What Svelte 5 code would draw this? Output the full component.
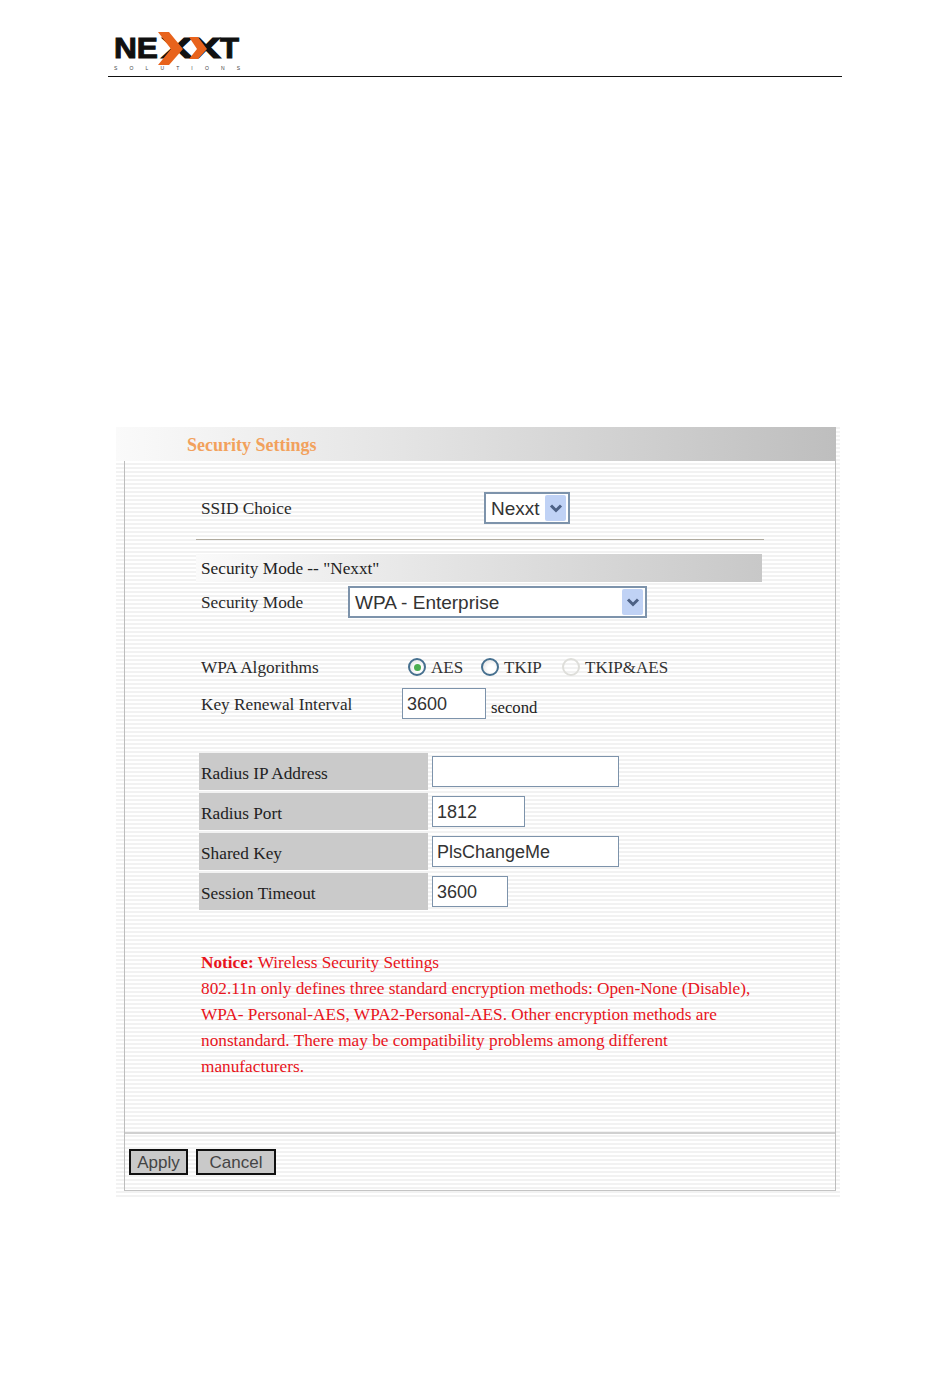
<script>
  let ssid = 'Nexxt';

  const radiusRows = [
    { label: 'Radius IP Address', value: '', width: 187 },
    { label: 'Radius Port', value: '1812', width: 93 },
    { label: 'Shared Key', value: 'PlsChangeMe', width: 187 },
    { label: 'Session Timeout', value: '3600', width: 76 }
  ];

  const notice = [
    '802.11n only defines three standard encryption methods: Open-None (Disable),',
    'WPA- Personal-AES, WPA2-Personal-AES. Other encryption methods are',
    'nonstandard. There may be compatibility problems among different',
    'manufacturers.'
  ];
</script>

{#snippet arrow()}
  <span class="arrow">
    <svg width="16" height="14" viewBox="0 0 16 14">
      <path d="M3 4.5 L8 9.5 L13 4.5" fill="none" stroke="#4d6185" stroke-width="3" />
    </svg>
  </span>
{/snippet}

<div class="page">
  <header class="doc-head">
    <svg class="logo" width="134" height="44" viewBox="0 0 134 44">
      <text x="6" y="31" class="mark" textLength="44" lengthAdjust="spacingAndGlyphs">NE</text>
      <text x="53" y="31" class="mark" textLength="32" lengthAdjust="spacingAndGlyphs">X</text>
      <text x="83" y="31" class="mark" textLength="30" lengthAdjust="spacingAndGlyphs">X</text>
      <text x="112" y="31" class="mark" textLength="19" lengthAdjust="spacingAndGlyphs">T</text>
      <path d="M50 5 L61 5 L75 22 L61 38 L50 38 L63 22 Z" fill="#e8631c" />
      <path d="M81 10 L90 10 L99 22 L90 32 L81 32 L89 22 Z" fill="#e8631c" />
      <text x="6" y="43" class="sub" textLength="126">SOLUTIONS</text>
    </svg>
  </header>

  <div class="panel">
    <div class="title-bar"><h1>Security Settings</h1></div>

    <div class="frame">
      <div class="content">
        <div class="row ssid-row">
          <span class="label">SSID Choice</span>
          <div class="select ssid-select">
            <span>{ssid}</span>
            {@render arrow()}
          </div>
        </div>

        <hr />

        <div class="mode-bar">Security Mode -- "Nexxt"</div>

        <div class="row mode-row">
          <span class="label">Security Mode</span>
          <div class="select mode-select">
            <span>WPA - Enterprise</span>
            {@render arrow()}
          </div>
        </div>

        <div class="row algo-row">
          <span class="label">WPA Algorithms</span>
          <div class="radios">
            <span class="radio on"></span><span class="radio-text aes">AES</span>
            <span class="radio"></span><span class="radio-text tkip">TKIP</span>
            <span class="radio off"></span><span class="radio-text">TKIP&amp;AES</span>
          </div>
        </div>

        <div class="row key-row">
          <span class="label">Key Renewal Interval</span>
          <div class="input key-input">3600</div>
          <span class="unit">second</span>
        </div>

        <div class="radius">
          {#each radiusRows as row}
            <div class="radius-row">
              <div class="radius-label">{row.label}</div>
              <div class="input" style="width: {row.width}px">{row.value}</div>
            </div>
          {/each}
        </div>

        <div class="notice">
          <p><b>Notice:</b> Wireless Security Settings</p>
          {#each notice as line}
            <p>{line}</p>
          {/each}
        </div>
      </div>

      <div class="actions">
        <button class="btn apply">Apply</button>
        <button class="btn cancel">Cancel</button>
      </div>
    </div>
  </div>
</div>

<style>
  :global(body) {
    margin: 0;
    background: #fff;
  }

  .page {
    width: 950px;
    height: 1395px;
    font-family: "Liberation Serif", serif;
    color: #222;
    overflow: hidden;
  }

  .doc-head {
    margin-left: 108px;
    width: 734px;
    height: 76px;
    border-bottom: 1px solid #111;
    box-sizing: content-box;
    display: flex;
    align-items: flex-end;
  }

  .logo {
    margin-bottom: 5px;
  }

  .mark {
    font-family: "Liberation Sans", sans-serif;
    font-weight: 700;
    font-size: 29px;
    fill: #111;
    stroke: #111;
    stroke-width: 1;
  }

  .sub {
    font-family: "Liberation Sans", sans-serif;
    font-size: 5px;
    fill: #444;
  }

  .panel {
    margin: 348px 0 0 116px;
    width: 724px;
    height: 774px;
    padding-top: 2px;
    box-sizing: border-box;
    background: repeating-linear-gradient(180deg, #fff 0, #fff 2px, #f2f2f2 2px, #f2f2f2 4px);
  }

  .title-bar {
    width: 720px;
    height: 34px;
    background: linear-gradient(90deg, #fafafa 0, #e4e4e4 40%, #bebebe 100%);
    display: flex;
    align-items: center;
  }

  h1 {
    margin: 2px 0 0 71px;
    font-size: 18px;
    font-weight: 700;
    color: #f2a15c;
  }

  .frame {
    margin-left: 8px;
    width: 712px;
    height: 730px;
    box-sizing: border-box;
    border-left: 1px solid #bdbdbd;
    border-right: 1px solid #bdbdbd;
    border-bottom: 1px solid #c4c4c4;
  }

  .content {
    height: 671px;
    border-bottom: 2px solid #d0d0d0;
    box-sizing: content-box;
    padding-left: 71px;
  }

  .row {
    display: flex;
    align-items: center;
  }

  .label {
    font-size: 17.25px;
    padding: 2px 0 0 5px;
    color: #2a2a2a;
  }

  .ssid-row {
    padding-top: 31px;
    height: 32px;
  }

  .ssid-row .label {
    width: 283px;
  }

  .select {
    height: 32px;
    box-sizing: border-box;
    background: #fff;
    border: 2px solid #7d93ab;
    display: flex;
    align-items: center;
    justify-content: space-between;
    font-family: "Liberation Sans", sans-serif;
    font-size: 19px;
    padding: 0 2px 0 5px;
    color: #333;
  }

  .select > span:first-child {
    padding-top: 2px;
  }

  .ssid-select {
    width: 86px;
  }

  .mode-select {
    width: 299px;
  }

  .arrow {
    width: 21px;
    height: 26px;
    background: #c0d2f5;
    border-radius: 2px;
    display: flex;
    align-items: center;
    justify-content: center;
  }

  hr {
    margin: 15px 0 0;
    width: 568px;
    height: 1px;
    border: 0;
    background: #b0ab9f;
  }

  .mode-bar {
    margin-top: 14px;
    width: 566px;
    height: 28px;
    box-sizing: border-box;
    padding: 2px 0 0 5px;
    display: flex;
    align-items: center;
    font-size: 17.25px;
    background: linear-gradient(90deg, #fafafa 0, #e6e6e6 40%, #c8c8c8 100%);
  }

  .mode-row {
    margin-top: 4px;
  }

  .mode-row .label {
    width: 147px;
  }

  .algo-row {
    margin-top: 36px;
    height: 26px;
  }

  .algo-row .label {
    width: 207px;
  }

  .radios {
    display: flex;
    align-items: center;
    font-size: 17px;
    color: #333;
  }

  .radio {
    width: 18px;
    height: 18px;
    box-sizing: border-box;
    border: 2px solid #46708f;
    border-radius: 50%;
    background: radial-gradient(circle at 60% 60%, #fff 30%, #dcdcdc 100%);
    display: flex;
    align-items: center;
    justify-content: center;
    margin-right: 5px;
  }

  .radio.on::after {
    content: '';
    width: 7px;
    height: 7px;
    border-radius: 50%;
    background: #4caf50;
  }

  .radio.off {
    border-color: #dededa;
    background: transparent;
  }

  .radio-text {
    padding-top: 2px;
  }

  .radio-text.aes {
    width: 50px;
  }

  .radio-text.tkip {
    width: 58px;
  }

  .key-row {
    margin-top: 8px;
  }

  .key-row .label {
    width: 201px;
  }

  .input {
    height: 31px;
    box-sizing: border-box;
    background: #fff;
    border: 1px solid #7d93ab;
    padding-left: 4px;
    font-family: "Liberation Sans", sans-serif;
    font-size: 18px;
    line-height: 31px;
    color: #333;
  }

  .key-input {
    width: 84px;
  }

  .unit {
    margin: 8px 0 0 5px;
    font-size: 16.7px;
  }

  .radius {
    margin: 34px 0 0 3px;
    display: flex;
    flex-direction: column;
    gap: 3px;
  }

  .radius-row {
    display: flex;
    align-items: center;
    gap: 4px;
    height: 37px;
  }

  .radius-label {
    width: 229px;
    height: 37px;
    box-sizing: border-box;
    padding: 11px 0 0 2px;
    background: #cacaca;
    font-size: 17.25px;
  }

  .notice {
    margin-top: 40px;
    padding-left: 5px;
    color: #e8141c;
    font-size: 17.25px;
    line-height: 26px;
  }

  .notice p {
    margin: 0;
    white-space: nowrap;
  }

  .actions {
    padding: 15px 0 0 4px;
    display: flex;
    gap: 8px;
  }

  .btn {
    height: 26px;
    box-sizing: border-box;
    border: 2px solid #111;
    background: #c9c9c9;
    font-family: "Liberation Sans", sans-serif;
    font-size: 17px;
    color: #444;
    padding: 2px 0 0;
  }

  .apply {
    width: 59px;
  }

  .cancel {
    width: 80px;
  }
</style>
